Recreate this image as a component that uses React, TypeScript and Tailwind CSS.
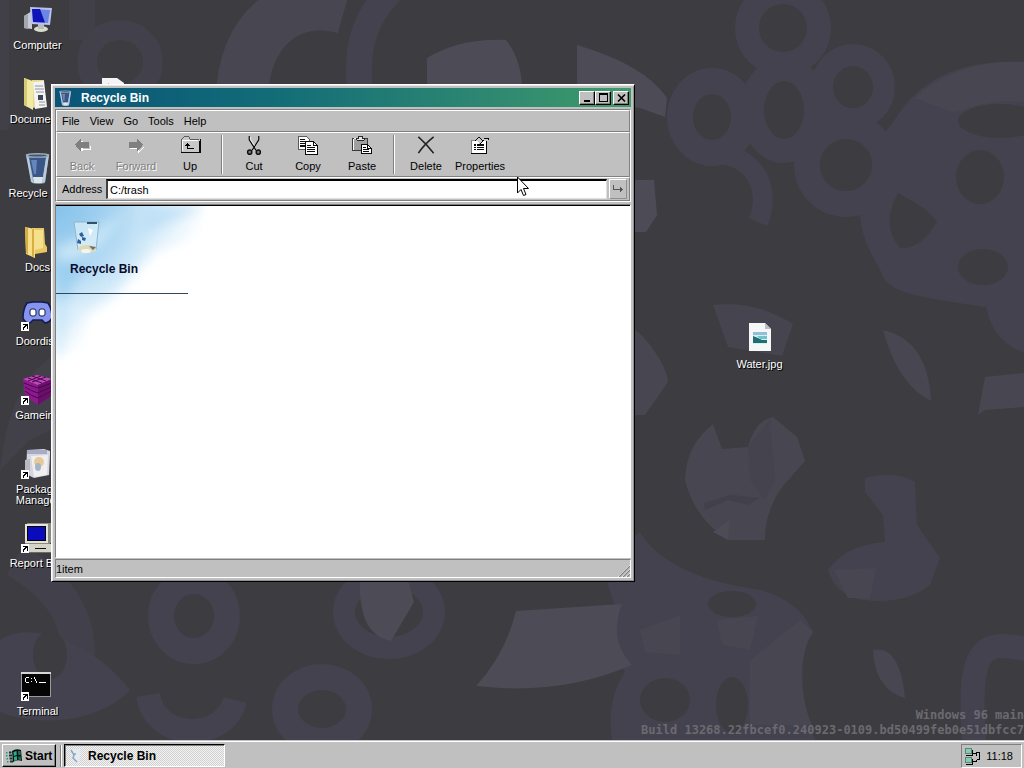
import React, { useState } from 'react';

/* ---------- wallpaper ---------- */

const Wallpaper = () => (
  <svg
    className="absolute inset-0 h-full w-full"
    viewBox="0 0 1024 740"
    preserveAspectRatio="xMidYMid slice"
    aria-hidden="true"
  >
    <rect width="1024" height="740" fill="#3d3c40" />
    <g fill="none" stroke="#44424e">
      {/* top left */}
      <path d="M-4 0V130M82 0V40" strokeWidth="26" stroke="#413f48" />
      <ellipse cx="120" cy="62" rx="33" ry="32" strokeWidth="20" stroke="#42404a" />
      <path d="M242 100C242 30 290 -8 345 8" strokeWidth="52" stroke="#484650" />
      <path d="M392 -10C362 20 356 50 360 90" strokeWidth="26" />
      {/* chain of rings on the right */}
      <circle cx="783" cy="28" r="36" strokeWidth="24" />
      <ellipse cx="853" cy="87" rx="31" ry="32" strokeWidth="22" />
      <ellipse cx="784" cy="110" rx="32" ry="41" strokeWidth="24" />
      <ellipse cx="712" cy="117" rx="32" ry="36" strokeWidth="26" />
      <circle cx="846" cy="165" r="39" strokeWidth="26" />
      <path d="M708 155C755 150 772 190 758 222" strokeWidth="20" />
      {/* bottom row */}
      <ellipse cx="194" cy="616" rx="33" ry="35" strokeWidth="26" />
      <ellipse cx="389" cy="612" rx="45" ry="36" strokeWidth="22" />
      <ellipse cx="322" cy="709" rx="37" ry="32" strokeWidth="26" />
      <path d="M148 695C155 742 225 742 235 700" strokeWidth="24" />
      <path d="M15 560C85 600 85 650 70 705" strokeWidth="34" stroke="#42404a" />
      <path d="M975 750C965 640 985 640 1030 650" strokeWidth="24" />
    </g>
    <g fill="#44424e">
      <path d="M870 250L880 140L905 105C935 70 975 60 1024 62V315C960 300 900 300 885 280Z" />
      <path d="M860 215L900 195V285C880 275 862 245 860 215Z" />
      <path d="M0 640C30 620 90 640 130 690C100 722 40 728 0 712Z" />
      <path d="M0 470C8 400 30 360 70 350V420L30 440Z" fill="#424049" />
      <path d="M600 560L640 532C655 560 700 582 760 590C790 598 806 615 813 632C800 650 797 690 815 740H612Q606 700 625 672Q610 650 616 610Z" />
      <path d="M985 300H1024V352C1000 345 988 325 985 300Z" />
      <path d="M865 478Q895 470 915 482L917 525L940 558L930 585Q905 605 862 600Q835 595 828 570Q845 545 885 542L883 515L865 492Z" />
    </g>
    <g fill="#484651">
      <path d="M915 98C945 70 985 60 1024 62V102C985 98 970 110 952 112Z" />
      <path d="M713 305Q755 300 793 324L782 356L728 347Z" fill="#46444f" />
      <path d="M883 330Q928 340 931 401Q898 385 883 330Z" />
      <path d="M985 377L1024 373V407L985 410L978 415Z" />
      <path d="M635 330C650 340 668 370 668 382L645 415H635Z" />
      <path d="M713 424L722 449L748 447Q755 420 773 417L797 437L805 461L783 486Q765 510 765 540H729Q695 520 685 480Q686 445 713 424Z" />
      <path d="M640 630L680 615V655L645 652ZM717 620L758 616L750 650L722 645Z" />
      <path d="M750 660L800 620L813 632C800 650 797 690 812 725H750Z" />
      <path d="M873 650Q900 645 905 698Q875 690 873 650Z" />
      <path d="M834 570L876 568L870 598H848Z" />
    </g>
    <g fill="#4d4b56">
      <path d="M427 90V58Q460 38 506 40Q522 60 522 90Z" />
      <path d="M577 45Q645 65 667 98L665 117L640 108L577 100Z" />
      <path d="M635 180H654L657 215L646 232H635Z" />
      <path d="M360 580H408L414 602L391 641Q358 635 360 580Z" />
      <path d="M516 611L622 604Q608 640 632 665Q560 696 476 686Q505 655 516 611Z" />
      <path d="M713 532L730 520L728 540Z" />
    </g>
    <g fill="#3d3c40">
      <ellipse cx="1000" cy="121" rx="42" ry="17" />
      <ellipse cx="980" cy="177" rx="24" ry="27" />
      <path d="M898 193Q930 210 937 222Q920 250 900 248Q880 225 898 193Z" />
      <ellipse cx="983" cy="267" rx="25" ry="18" />
      <ellipse cx="732" cy="604" rx="24" ry="13" />
      <ellipse cx="665" cy="700" rx="25" ry="22" />
      <ellipse cx="732" cy="705" rx="16" ry="28" />
      <ellipse cx="50" cy="655" rx="17" ry="24" />
    </g>
    <g fill="#42404a">
      <path d="M704 503L731 495L760 498L748 505L728 500L705 510Z" />
      <path d="M748 447L770 420L775 480L765 500L750 480Z" fill="#45434e" />
    </g>
  </svg>
);

/* ---------- desktop icons, 32x32 ---------- */

const Shortcut = () => (
  <g shapeRendering="crispEdges">
    <rect x="0" y="22" width="8" height="9" fill="#fff" />
    <path d="M2 24h5v5h-1v-3h-1v1h-1v1h-1v2h-1v-3h1v-1h1v-1h-2z" fill="#000" />
  </g>
);

const ComputerIcon = () => (
  <svg width="32" height="32" viewBox="0 0 32 32">
    <path d="M3 12l8-5v18l-8-1z" fill="#c9cbd3" />
    <path d="M3 12l4-2v15l-4-1z" fill="#a4a7b2" />
    <ellipse cx="20" cy="25" rx="7" ry="3" fill="#d8dcc8" />
    <path d="M17 20h6v5h-6z" fill="#b9bdc0" />
    <path d="M9 3l22 1-2 17-19-1z" fill="#b9c3ea" />
    <path d="M11 5l18 1-2 13-15-1z" fill="#6d86e6" />
    <path d="M11 5h8l5 13.500-12-.5z" fill="#1014b8" />
  </svg>
);

const DocumentsIcon = () => (
  <svg width="32" height="32" viewBox="0 0 32 32">
    <path d="M11 2h12v26l-12 2z" fill="#e4d98b" />
    <path d="M12 4l11-1 3 26-12 2z" fill="#f3f3f1" />
    <path d="M14 8h8M14 11h9M15 14h8M18 24h6M18 27h6" stroke="#8e95a3" />
    <rect x="17" y="17" width="5" height="5" fill="#3d4658" />
    <path d="M3 0l9 3v29l-9-5z" fill="#f1eaa5" />
    <path d="M3 0l3 1v28l-3-2z" fill="#d7cb72" />
  </svg>
);

const FolderIcon = () => (
  <svg width="32" height="32" viewBox="0 0 32 32">
    <path d="M11 2h12l1 16 2 3v5l-12 2z" fill="#e9c863" />
    <path d="M13 4h9v18l-8 2z" fill="#f5e08e" />
    <path d="M4 1l10 2v29l-9-4z" fill="#f7df87" />
    <path d="M4 1l3 1v26l-2-1zM11 3h2v29l-2-2z" fill="#d7ae43" />
  </svg>
);

const BinIcon = ({ size = 32 }: { size?: number }) => (
  <svg width={size} height={size} viewBox="0 0 32 32">
    <path d="M5 2h23l-4 29q-6 2-13 0z" fill="#8199b3" />
    <path d="M8 6h17l-3 19h-10z" fill="#3a5687" />
    <path d="M10 8h6l-1 14h-2z" fill="#6286bd" />
    <path d="M5 3l3 3 4 23 1 2-3-1zM28 3l-4 27-3 1 4-25z" fill="#b9cadb" />
    <ellipse cx="16.500" cy="3" rx="12" ry="2" fill="#9cacba" />
    <ellipse cx="16.500" cy="3.500" rx="9" ry="1" fill="#46556a" />
    <path d="M12 25h10l-1 6h-8z" fill="#dce6e8" />
  </svg>
);

const DoordiscIcon = () => (
  <svg width="32" height="32" viewBox="0 0 32 32">
    <path
      d="M6 3l6-1h9l6 1q4 6 4 15-3 5-7 5l-3-3h-9l-3 3q-5 0-7-5 0-9 4-15z"
      fill="#8494ef"
      stroke="#141a4e"
      strokeWidth="1.500"
    />
    <rect x="9" y="9" width="6" height="7" rx="2" fill="#fff" stroke="#141a4e" />
    <rect x="18" y="9" width="6" height="7" rx="2" fill="#fff" stroke="#141a4e" />
    <Shortcut />
  </svg>
);

const GameIcon = () => (
  <svg width="32" height="32" viewBox="0 0 32 32">
    <path d="M2 5l14-4 15 4-1 17-13 9-13-9z" fill="#8d1a8c" />
    <path d="M2 5l14-4 15 4-14 6z" fill="#bd49b9" />
    <path d="M17 11l14-6-1 17-13 9z" fill="#6b0f6c" />
    <path
      d="M3 9q7 3 14 5l14-5M4 13q6 4 13 6l13-6M4 17q6 5 13 7l13-7M7 4l14 5M11 2l14 5M25 3L11 8M20 2L7 7"
      stroke="#4a084d"
      fill="none"
    />
    <Shortcut />
  </svg>
);

const PackageIcon = () => (
  <svg width="32" height="32" viewBox="0 0 32 32">
    <path d="M6 2l17-1 6 2v4l-1 20-15 3-8-4z" fill="#d4d5de" />
    <path d="M6 2h20v4h-20z" fill="#a9abc6" />
    <path d="M10 8l17-1-1 20-13 2z" fill="#efeff2" />
    <ellipse cx="18" cy="14" rx="5" ry="5" fill="#e8c897" />
    <ellipse cx="17" cy="19" rx="3" ry="4" fill="#a6b4c8" />
    <path d="M4 12l5-1v12h-5z" fill="#b8babf" />
    <Shortcut />
  </svg>
);

const ReportIcon = () => (
  <svg width="32" height="32" viewBox="0 0 32 32" shapeRendering="crispEdges">
    <path d="M4 3l2-2h24v19l-2 2h-24z" fill="#8a8a80" />
    <rect x="4" y="2" width="23" height="19" fill="#e5e4d8" />
    <rect x="6" y="4" width="19" height="15" fill="#000" />
    <rect x="7" y="5" width="17" height="13" fill="#0a0bbd" />
    <path d="M1 22h29v9h-29z" fill="#d5d4c9" />
    <path d="M1 30h29v1h-29z" fill="#6b6b64" />
    <rect x="14" y="26" width="11" height="1" fill="#111" />
    <Shortcut />
  </svg>
);

const TerminalIcon = () => (
  <svg width="32" height="32" viewBox="0 0 32 32" shapeRendering="crispEdges">
    <rect x="0" y="2" width="30" height="25" fill="#9a9a9a" />
    <rect x="0" y="2" width="30" height="2" fill="#d6d6d6" />
    <rect x="1" y="4" width="28" height="22" fill="#050505" />
    <path
      d="M5 7h3v1h-3zM4 8h1v4h-1zM5 12h3v1h-3zM10 8h1v1h-1zM10 11h1v1h-1zM13 7h1v2h-1zM14 9h1v2h-1zM15 11h1v2h-1zM18 12h7v1h-7z"
      fill="#fff"
    />
    <Shortcut />
  </svg>
);

const ImageFileIcon = () => (
  <svg width="32" height="32" viewBox="0 0 32 32">
    <path d="M6 0h16l6 6v22h-22z" fill="#f6f8f8" />
    <path d="M22 0l6 6h-6z" fill="#b9bfc4" />
    <rect x="10" y="9" width="14" height="12" fill="#d9eef3" />
    <path d="M10 9h14v3h-14z" fill="#8ec0d8" />
    <path d="M10 13l5 2 4 2h5v3h-14z" fill="#1f6f70" />
    <path d="M14 13h10v3h-7z" fill="#6fc3cd" />
  </svg>
);

const TextFileIcon = () => (
  <svg width="32" height="32" viewBox="0 0 32 32">
    <path d="M6 0h15l7 5v25h-22z" fill="#f4f4f6" />
    <path d="M12 5l2 2-2 1z" fill="#b0688a" />
  </svg>
);

/* ---------- toolbar icons, drawn on a 24x20 grid ---------- */

const BackIcon = () => (
  <svg width="26" height="22" viewBox="0 0 24 20" shapeRendering="crispEdges">
    <path d="M12 6v9M12 14h8v-4" stroke="#fff" fill="none" />
    <path d="M5 9l6-6v4h8v5h-8v4z" fill="#808080" />
  </svg>
);

const ForwardIcon = () => (
  <svg width="26" height="22" viewBox="0 0 24 20" shapeRendering="crispEdges">
    <path d="M6 13h8v4l6-6" stroke="#fff" fill="none" />
    <path d="M19 9l-6-6v4h-8v5h8v4z" fill="#808080" />
  </svg>
);

const UpIcon = () => (
  <svg width="26" height="22" viewBox="0 0 26 22" shapeRendering="crispEdges">
    <path d="M4 5l2-3h6l2 3h9v13h-19z" fill="#c8c8c8" />
    <path d="M4.500 18v-13.500l2-2.500h5l2 2.500h9" stroke="#555" fill="none" />
    <path d="M5.500 17v-11.500h16" stroke="#fff" fill="none" />
    <path d="M4 18.500h19.500v-14M22.500 18v-12" stroke="#000" fill="none" />
    <path d="M10 8h1v1h1v1h1v1h-2v3h6v1h-7v-4h-2v-1h1v-1h1z" fill="#000" />
  </svg>
);

const CutIcon = () => (
  <svg width="26" height="22" viewBox="0 0 26 22">
    <path d="M8 1v4l7 11M18 1v4l-7 11" stroke="#000" fill="none" strokeWidth="1.200" />
    <path d="M9.500 2v3l4 6" stroke="#fff" fill="none" strokeWidth=".8" />
    <circle cx="8.500" cy="18" r="2.200" fill="#777" stroke="#111" strokeWidth="1.500" />
    <circle cx="17.500" cy="18" r="2.200" fill="#777" stroke="#111" strokeWidth="1.500" />
  </svg>
);

const CopyIcon = () => (
  <svg width="26" height="22" viewBox="0 0 26 22" shapeRendering="crispEdges">
    <path d="M3.500 1.500h8l3 3v11h-11z" fill="#fff" stroke="#555" />
    <path d="M5 4.500h5M5 6.500h5M5 8.500h5M5 10.500h5M5 12.500h5" stroke="#000" />
    <path d="M10.500 6.500h8l4 4v10h-12z" fill="#fff" stroke="#000" />
    <path d="M18.500 7v4h4" stroke="#000" fill="none" />
    <path d="M12 11.500h4M12 13.500h8M12 15.500h8M12 17.500h8" stroke="#000" />
  </svg>
);

const PasteIcon = () => (
  <svg width="26" height="22" viewBox="0 0 26 22" shapeRendering="crispEdges">
    <path d="M3.500 3.500h15v13h-15z" fill="#a0a0a0" stroke="#333" />
    <path d="M4.500 16v-12h3" stroke="#fff" fill="none" />
    <path d="M7.500 5.500v-2h2v-2h4v2h2v2z" fill="#e6e6e6" stroke="#222" />
    <path d="M12.500 9.500h6l4 4v6h-10z" fill="#fff" stroke="#000" />
    <path d="M18.500 10v4h4M14 13.500h3M14 15.500h6M14 17.500h6" stroke="#000" fill="none" />
  </svg>
);

const DeleteIcon = () => (
  <svg width="26" height="22" viewBox="0 0 26 22">
    <path d="M6 4l8 7 6 8" stroke="#fff" fill="none" />
    <path d="M5 2q8 7 16 17M21 2q-10 8-16 17" stroke="#222" strokeWidth="1.700" fill="none" />
  </svg>
);

const PropertiesIcon = () => (
  <svg width="26" height="22" viewBox="0 0 26 22" shapeRendering="crispEdges">
    <path d="M4.500 5.500h15v14h-15z" fill="#fff" stroke="#808080" />
    <path d="M4 19.500h15.500v-13" stroke="#000" fill="none" />
    <path d="M8 5l4-3 3 3 2-2h5v3h-6l-3 4-2-3z" fill="#ccc" />
    <path d="M8 5.500l4-3 4 4M17 3.500h5v2M13 9l4-4" stroke="#000" fill="none" />
    <path d="M7 9.500h2M10 9.500h7M7 11.500h2M10 11.500h7M7 13.500h2M10 13.500h7M7 15.500h2M10 15.500h7" stroke="#000" />
  </svg>
);

/* ---------- small pieces ---------- */

const WindowsLogo = () => (
  <svg width="18" height="16" viewBox="0 0 18 16">
    <path d="M7 3q4-3 9-1l1 11q-5-2-9 1z" fill="#06120f" />
    <path d="M8.500 4l3-1 .3 4-3 1zM8.800 9l3-1 .3 4-2.800 1z" fill="#35a98c" />
    <path d="M13 3h2.500l.3 4h-2.500zM13.200 8.500h2.600l.2 3.500-2.500-.2z" fill="#17735d" />
    <path d="M1 4h1.500v1.500h-1.500zM1 7h1.500v1.500h-1.500zM1.500 10h1.500v1.500h-1.500zM2 13h1.500v1.500h-1.500z" fill="#2a8f78" />
    <path d="M4 3.500h2.500v2h-2.500zM4 6.500h3v2h-3zM4.500 9.500h3v2h-3zM5 12.500h3v2h-3z" fill="#0c3a30" />
  </svg>
);

const NetworkIcon = () => (
  <svg width="17" height="18" viewBox="0 0 17 18" shapeRendering="crispEdges">
    <path d="M1.500 1.500h6v5h-6zM1.500 10.500h6v5h-6z" fill="#7fcfb5" stroke="#5f8377" />
    <path d="M2 8.500h6.500v-6M2 17.500h6.500v-6" fill="none" stroke="#000" />
    <path d="M9 6.500h3v2M9 14.500h3v-2M12 5.500h3.500v7h-3" fill="none" stroke="#000" />
  </svg>
);

const MouseCursor = () => (
  <svg
    className="pointer-events-none absolute left-[517px] top-[176px]"
    width="12"
    height="21"
    viewBox="0 0 12 21"
    aria-hidden="true"
  >
    <path d="M.5 1v16l3.500-3.500 2.500 6 2.500-1-2.500-6h5z" fill="#fff" stroke="#000" />
  </svg>
);

const SkyCorner = () => (
  <svg className="absolute left-0 top-px" width="170" height="190" viewBox="0 0 170 190" aria-hidden="true">
    <defs>
      <radialGradient id="sky" gradientUnits="userSpaceOnUse" cx="0" cy="0" r="150">
        <stop offset="0" stopColor="#86c2ea" />
        <stop offset=".4" stopColor="#a8d4f1" />
        <stop offset=".7" stopColor="#dceffb" />
        <stop offset="1" stopColor="#fff" />
      </radialGradient>
      <filter id="soft" x="-50%" y="-50%" width="200%" height="200%">
        <feGaussianBlur stdDeviation="6" />
      </filter>
    </defs>
    <rect width="170" height="190" fill="url(#sky)" />
    <g filter="url(#soft)">
      <path d="M60 90L100 45L170 20V190H15L30 110Z" fill="#fff" />
      <path d="M0 42L30 30L70 5L45 40L0 62Z" fill="#e3f3fc" opacity=".6" />
      <path d="M90 0H150L85 30Z" fill="#b5dcf5" opacity=".7" />
      <path d="M0 50L28 60L12 90L0 100Z" fill="#8cc8ef" opacity=".6" />
      <path d="M0 100H14L6 150H0Z" fill="#b9ddf5" opacity=".6" />
    </g>
  </svg>
);

type IconProps = {
  label: string;
  icon: React.ReactNode;
  place?: string;
};

const DesktopIcon = ({ label, icon, place = '' }: IconProps) => (
  <button className={`flex w-[75px] flex-col items-center gap-1 pt-1 [&>svg]:mr-0.5 ${place}`}>
    {icon}
    <span className="px-3 text-center text-[11px] leading-[11px] text-white [text-shadow:1px_1px_0_#000]">
      {label}
    </span>
  </button>
);

const desktopIcons = [
  { label: 'Computer', icon: <ComputerIcon />, place: 'row-start-1' },
  { label: 'Documents', icon: <DocumentsIcon />, place: 'row-start-2' },
  { label: 'Recycle\u00a0Bin', icon: <BinIcon />, place: 'row-start-3' },
  { label: 'Docs', icon: <FolderIcon />, place: 'row-start-4' },
  { label: 'Doordisc', icon: <DoordiscIcon />, place: 'row-start-5' },
  { label: 'Gameing', icon: <GameIcon />, place: 'row-start-6' },
  { label: 'Package Manager', icon: <PackageIcon />, place: 'row-start-7' },
  { label: 'Report\u00a0Bug', icon: <ReportIcon />, place: 'row-start-8' },
  { label: 'Terminal', icon: <TerminalIcon />, place: 'row-start-10' },
  { label: '', icon: <TextFileIcon />, place: 'col-start-2 row-start-2' },
];

const menus = ['File', 'View', 'Go', 'Tools', 'Help'];

const raised =
  'border border-t-white border-l-white border-r-black border-b-black shadow-[inset_-1px_-1px_0_#808080]';

const ToolButton = ({ label, icon, disabled = false }: { label: string; icon: React.ReactNode; disabled?: boolean }) => (
  <button
    disabled={disabled}
    className="flex w-[50px] flex-col items-center gap-0.5 text-[11px] leading-4 text-black disabled:text-[#808080] disabled:[text-shadow:1px_1px_0_#fff]"
  >
    {icon}
    {label}
  </button>
);

const ToolSeparator = () => (
  <div className="flex w-1.5 justify-center">
    <div className="w-0.5 border-l border-r border-l-[#808080] border-r-white" />
  </div>
);

const RecycleWindow = () => {
  const [address, setAddress] = useState('C:/trash');

  return (
    <section className="absolute left-[51px] top-[84px] flex h-[498px] w-[584px] flex-col border border-t-white border-l-white border-r-black border-b-black bg-[#c0c0c0] p-[3px] shadow-[inset_1px_1px_0_#e8e8e8,inset_-1px_-1px_0_#909090]">
      {/* Title bar */}
      <header className="flex h-[19px] shrink-0 items-center bg-linear-to-r from-[#0a5478] via-[#136e77] via-40% to-[#3f9a6a] px-0.5">
        <BinIcon size={16} />
        <h1 className="flex-1 pl-2 text-[12px] font-bold leading-4 text-white">Recycle Bin</h1>
        <button aria-label="Minimize" className={`flex h-[14px] w-4 items-end justify-center bg-[#c0c0c0] pb-0.5 ${raised}`}>
          <span className="h-0.5 w-1.5 bg-black" />
        </button>
        <button aria-label="Maximize" className={`flex h-[14px] w-4 items-center justify-center bg-[#c0c0c0] ${raised}`}>
          <span className="h-[9px] w-[9px] border border-t-2 border-black" />
        </button>
        <button aria-label="Close" className={`ml-0.5 flex h-[14px] w-4 items-center justify-center bg-[#c0c0c0] ${raised}`}>
          <svg width="9" height="8" viewBox="0 0 9 8">
            <path d="M1 .5l7 7M8 .5l-7 7" stroke="#000" strokeWidth="1.600" />
          </svg>
        </button>
      </header>

      <div className="mt-0.5 shrink-0 border border-[#808080] border-b-white border-r-white">
        {/* Menu bar */}
        <nav className="flex h-[22px] items-center gap-2.5 border border-[#808080] border-l-white border-t-white px-[5px] text-[11px] leading-4 text-black">
          {menus.map((menu) => (
            <button key={menu}>{menu}</button>
          ))}
        </nav>

        {/* Toolbar */}
        <div className="flex h-[45px] gap-1 border border-[#808080] border-l-white border-t-white py-0.5">
          <ToolButton label="Back" icon={<BackIcon />} disabled />
          <ToolButton label="Forward" icon={<ForwardIcon />} disabled />
          <ToolButton label="Up" icon={<UpIcon />} />
          <ToolSeparator />
          <ToolButton label="Cut" icon={<CutIcon />} />
          <ToolButton label="Copy" icon={<CopyIcon />} />
          <ToolButton label="Paste" icon={<PasteIcon />} />
          <ToolSeparator />
          <ToolButton label="Delete" icon={<DeleteIcon />} />
          <ToolButton label="Properties" icon={<PropertiesIcon />} />
        </div>

        {/* Address bar */}
        <form
          className="flex h-6 items-center border border-[#808080] border-l-white border-t-white pl-[5px] pr-0.5"
          onSubmit={(e) => e.preventDefault()}
        >
          <label htmlFor="address" className="w-11 text-[11px] leading-4 text-black">
            Address
          </label>
          <input
            id="address"
            value={address}
            onChange={(e) => setAddress(e.target.value)}
            className="h-5 min-w-0 flex-1 border-2 border-b border-r border-black border-b-[#dfdfdf] border-l-[#404040] border-r-[#dfdfdf] bg-white px-0.5 text-[11px] leading-4 text-black outline-none"
          />
          <button
            aria-label="Go"
            className="ml-0.5 flex h-5 w-[18px] items-center justify-center border border-[#909090] border-l-white border-t-white bg-[#c0c0c0]"
          >
            <svg width="12" height="8" viewBox="0 0 12 8" shapeRendering="crispEdges">
              <path d="M1.500 0v4.500h9M8.500 2v5M9.500 3v3" fill="none" stroke="#555" />
            </svg>
          </button>
        </form>
      </div>

      {/* Folder contents */}
      <div className="relative mt-0.5 flex-1 overflow-hidden border border-[#808080] border-b-white border-r-white bg-white">
        <div className="h-full border-t border-black">
          <SkyCorner />
          <div className="relative flex w-[132px] flex-col border-b border-[#33475c] pb-4 pt-3">
            <svg className="ml-3.5" width="36" height="40" viewBox="0 0 36 40" aria-hidden="true">
              <path d="M4 4h25l-3 29h-18z" fill="#d6ecf8" opacity=".8" />
              <path d="M4 4l4 28M29 4l-3 28M4 4h25" stroke="#8db6cf" fill="none" />
              <path d="M17 5h10" stroke="#31516d" strokeWidth="2" />
              <path d="M9 16l3-2 2 4-3 1zM12 19l4 1-1 3-3-1zM8 21l3 2v3l-4-1z" fill="#2e5f9c" />
              <path d="M18 10l5 2-3 6z" fill="#fff" />
              <ellipse cx="17" cy="31" rx="9" ry="4" fill="#ddd9b4" />
              <path d="M19 28l7 1-3 3z" fill="#64717a" />
              <ellipse cx="16" cy="33" rx="5" ry="2" fill="#f4f6ee" />
            </svg>
            <h2 className="mt-[3px] pl-3.5 text-[12px] font-bold leading-4 text-[#0a0a2a]">Recycle Bin</h2>
          </div>
        </div>
      </div>

      {/* Status bar */}
      <footer className="mt-px flex h-[19px] shrink-0 items-center border border-[#808080] border-b-white border-r-white text-[11px] leading-4 text-black">
        <span className="flex-1">1item</span>
        <svg className="self-end" width="13" height="13" viewBox="0 0 13 13" aria-hidden="true">
          <path d="M1 13L13 1M5 13l8-8M9 13l4-4" stroke="#fff" />
          <path d="M2 13L13 2M6 13l7-7M10 13l3-3" stroke="#808080" strokeWidth="1.200" />
        </svg>
      </footer>
    </section>
  );
};

const Taskbar = () => (
  <footer className="flex h-7 shrink-0 items-center border-t border-[#c0c0c0] bg-[#c0c0c0] px-0.5 pt-0.5 shadow-[inset_0_1px_0_#fff]">
    <button className={`flex h-[23px] w-[54px] items-center gap-0.5 pl-0.5 text-[12px] font-bold leading-4 text-black ${raised}`}>
      <WindowsLogo />
      Start
    </button>
    <div className="ml-1 h-[22px] w-0.5 border-l border-r border-l-[#808080] border-r-white" />
    <button className="ml-0.5 flex h-[23px] w-[161px] items-center gap-1 border border-t-black border-l-black border-r-white border-b-white bg-[conic-gradient(#f4f4f4_25%,#cfcfcf_0_50%,#f4f4f4_0_75%,#cfcfcf_0)] bg-size-[2px_2px] pl-[3px] text-[12px] font-bold leading-4 text-black shadow-[inset_1px_1px_0_#808080]">
      <svg width="16" height="16" viewBox="0 0 16 16" aria-hidden="true">
        <path d="M2 1h11l-2 14h-6z" fill="#e4ebf0" />
        <path d="M3 2l3 5-1 3 4 4M5 6h3" stroke="#8fa3bd" strokeWidth="1.500" fill="none" />
      </svg>
      Recycle Bin
    </button>
    <div className="ml-auto flex h-6 w-[61px] items-center justify-between border border-[#808080] border-b-white border-r-white pl-0.5 pr-2 text-[11px] leading-4 text-black">
      <NetworkIcon />
      <time>11:18</time>
    </div>
  </footer>
);

const App = () => {
  return (
    <div className="flex h-screen flex-col overflow-hidden bg-[#3d3c40] font-['Liberation_Sans',Arial,sans-serif]">
      <main className="relative flex-1 overflow-hidden">
        <Wallpaper />

        <div className="relative grid auto-rows-[74px] grid-cols-[75px_75px]">
          {desktopIcons.map((item) => (
            <DesktopIcon key={item.place} {...item} />
          ))}
        </div>

        <div className="absolute left-[722px] top-[319px]">
          <DesktopIcon label="Water.jpg" icon={<ImageFileIcon />} />
        </div>

        <div className="absolute bottom-0.5 right-0 text-right font-['DejaVu_Sans_Mono',monospace] text-[12px] font-bold leading-[15px] text-[#6b6a70]">
          <p>Windows 96 main</p>
          <p>Build 13268.22fbcef0.240923-0109.bd50499feb0e51dbfcc7</p>
        </div>

        <RecycleWindow />
        <MouseCursor />
      </main>

      <Taskbar />
    </div>
  );
};

export default App;
